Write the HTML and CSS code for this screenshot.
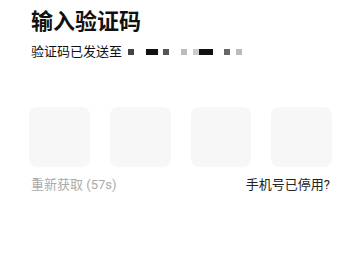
FILE: index.html
```html
<!DOCTYPE html>
<html lang="zh-CN">
  <head>
    <meta charset="UTF-8" />
    <meta name="viewport" content="width=device-width, initial-scale=1.0" />
    <title>输入验证码</title>
    <link rel="stylesheet" href="styles.css">
  </head>
  <body>
    <div class="page">
      <h1>输入验证码</h1>
      <div class="sent-to">
        <span>验证码已发送至</span>
        <span class="mask">
          <i class="dot d1"></i>
          <i class="dot d2"></i>
          <i class="dot d3"></i>
          <i class="dot d4"></i>
          <i class="dot d5"></i>
          <i class="dot d6"></i>
          <i class="dot d7"></i>
          <i class="dot d8"></i>
        </span>
      </div>

      <div class="code-boxes">
        <div class="code-box"></div>
        <div class="code-box"></div>
        <div class="code-box"></div>
        <div class="code-box"></div>
      </div>

      <div class="code-actions">
        <span class="resend">重新获取 (57s)</span>
        <span class="stopped">手机号已停用?</span>
      </div>
    </div>
  </body>
</html>
```

FILE: styles.css
```css
body {
  margin: 0;
  padding: 0;
  background: #ffffff;
  font-family: Roboto, "Noto Sans CJK SC", sans-serif;
  color: #222;
}

.page {
  padding: 7px 29px 0 29px;
}

h1 {
  margin: 0 0 0 2px;
  font-size: 22px;
  line-height: 30px;
  font-weight: 700;
  color: #111;
}

.sent-to {
  display: flex;
  align-items: center;
  margin: 5px 0 0 2px;
  font-size: 13px;
  line-height: 20px;
  color: #111;
}

.mask {
  display: flex;
  align-items: center;
  height: 20px;
  margin-left: 6px;
}

.dot {
  display: block;
  width: 6px;
  height: 6px;
}

.d1 { background: #444; }
.d2 { background: #111; width: 12px; margin-left: 12px; }
.d3 { background: #555; margin-left: 5px; }
.d4 { background: #bbb; margin-left: 12px; }
.d5 { background: #ccc; margin-left: 6px; }
.d6 { background: #111; width: 14px; }
.d7 { background: #666; margin-left: 11px; }
.d8 { background: #bbb; margin-left: 6px; }

.code-boxes {
  display: grid;
  grid-template-columns: repeat(4, 1fr);
  gap: 20px;
  margin-top: 45px;
}

.code-box {
  height: 60px;
  background: #f7f7f7;
  border-radius: 8px;
}

.code-actions {
  display: flex;
  justify-content: space-between;
  margin: 8px 2px 0 2px;
  font-size: 13px;
  line-height: 20px;
}

.resend {
  color: #aaa;
}

.stopped {
  color: #222;
}
```
